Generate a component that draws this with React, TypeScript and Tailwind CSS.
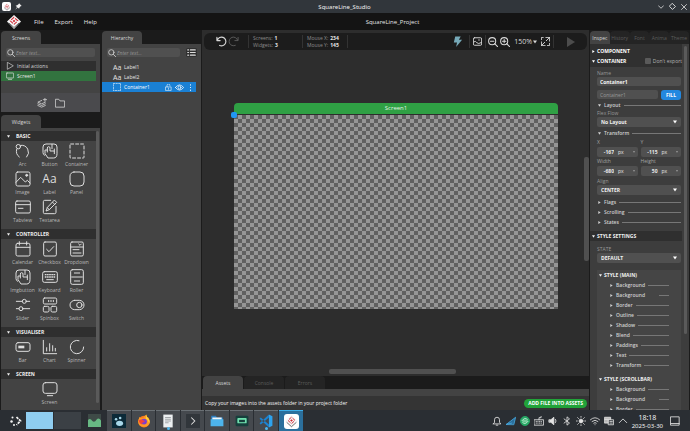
import React, { useState } from 'react';
import { clsx } from 'clsx';

interface IconProps {
    className?: string;
}

interface SvgProps extends IconProps {
    children: React.ReactNode;
    width?: number;
}

const Svg: React.FC<SvgProps> = ({ className = 'size-4', width = 1.5, children }) => (
    <svg
        viewBox="0 0 24 24"
        className={`shrink-0 ${className}`}
        fill="none"
        stroke="currentColor"
        strokeWidth={width}
        strokeLinecap="round"
        strokeLinejoin="round"
        aria-hidden="true"
    >
        {children}
    </svg>
);

const fist = (
    <>
        <path d="M4 18.500q-2.500-1-2.500-4V6q0-4.500 4.500-4.500h12q4.500 0 4.500 4.500v10q0 6.500-5 6.500H9L4.500 16v-5.500H8" />
        <path d="M8 13.500V7.500a2 2 0 0 1 4 0V12h6.500v4M15 2v6.500M18.500 12V9" />
    </>
);

const widgetIcons: Record<string, React.ReactNode> = {
    Arc: (
        <>
            <path d="M6.500 21A10.500 10.500 0 0 1 2.500 9.500M8.500 3.500A10.500 10.500 0 0 1 17.500 21" />
            <circle cx="5" cy="5.500" r="3.300" />
        </>
    ),
    Button: fist,
    Container: <rect x="1.500" y="1.500" width="21" height="21" rx="1" strokeDasharray="4.500 3" />,
    Image: (
        <>
            <rect x="1.500" y="1.500" width="21" height="21" rx="2.500" />
            <path d="M1.500 17l7-7.500 7 7 3-2.500 4 4" />
            <circle cx="17.500" cy="6.500" r="1.500" fill="currentColor" />
        </>
    ),
    Panel: <rect x="1.500" y="1.500" width="21" height="21" rx="6" />,
    Tabview: (
        <>
            <rect x="1" y="3" width="22" height="18" rx="2" />
            <path d="M1 8.500h22M5 14h7" />
        </>
    ),
    Textarea: (
        <>
            <path d="M13 2H4a2 2 0 0 0-2 2v16a2 2 0 0 0 2 2h15a2 2 0 0 0 2-2v-9" />
            <path d="M19 2l3 3-11 11-5 2 2-5zM16 5l3 3M8 13l3 3" />
        </>
    ),
    Calendar: (
        <>
            <rect x="1.500" y="3.500" width="21" height="19" rx="2.500" />
            <path d="M1.500 9.500h21M6.500 1v5M17.500 1v5" />
        </>
    ),
    Checkbox: (
        <>
            <rect x="2.500" y="1.500" width="19" height="21" rx="2" />
            <path d="M7 12.500l3.500 3.500 7-7.500" />
        </>
    ),
    Dropdown: (
        <>
            <rect x="2.500" y="1.500" width="19" height="21" rx="2" />
            <path d="M2.500 9h19M14.500 4.500l2 2 2-2M6 13h9M6 18h12" />
        </>
    ),
    Imgbutton: fist,
    Keyboard: (
        <>
            <rect x="1" y="4" width="22" height="16" rx="2.500" />
            <path d="M5 8.500h14M5 12h14" strokeDasharray="1 2.250" strokeWidth="2" />
            <path d="M7 16h10" />
        </>
    ),
    Roller: (
        <>
            <rect x="2.500" y="1" width="19" height="22" rx="2.500" />
            <path d="M8 6h8M4 12h16M8 18h8" />
        </>
    ),
    Slider: (
        <>
            <path d="M2 6.500h9M17 6.500h5M2 17.500h4M12 17.500h10" />
            <circle cx="14" cy="6.500" r="3" />
            <circle cx="9" cy="17.500" r="3" />
        </>
    ),
    Spinbox: (
        <>
            <rect x="2" y="1.500" width="20" height="9" rx="2" />
            <path d="M10 5v2M13.500 5v2M17 5v2" />
            <rect x="2" y="14" width="8.500" height="8.500" rx="2" />
            <rect x="13.500" y="14" width="8.500" height="8.500" rx="2" />
        </>
    ),
    Switch: (
        <>
            <rect x="1.500" y="5" width="21" height="14" rx="7" />
            <circle cx="15.500" cy="12" r="4" />
        </>
    ),
    Bar: (
        <>
            <rect x="1.500" y="5.500" width="21" height="13" rx="3" />
            <path d="M5 12h9" strokeWidth="4" strokeLinecap="butt" />
        </>
    ),
    Chart: <path d="M2 2v20h20M7 18v-5M11.500 18V7M16 18v-8M20 18v-4" />,
    Spinner: <path d="M15 2.500A10 10 0 1 0 22 12" />,
    Screen: (
        <>
            <rect x="1.500" y="2.500" width="21" height="16" rx="3.500" />
            <path d="M8 22h8" />
        </>
    ),
};

const widgetSections = [
    { title: 'BASIC', items: ['Arc', 'Button', 'Container', 'Image', 'Label', 'Panel', 'Tabview', 'Textarea'] },
    {
        title: 'CONTROLLER',
        items: ['Calendar', 'Checkbox', 'Dropdown', 'Imgbutton', 'Keyboard', 'Roller', 'Slider', 'Spinbox', 'Switch'],
    },
    { title: 'VISUALISER', items: ['Bar', 'Chart', 'Spinner'] },
    { title: 'SCREEN', items: ['Screen'] },
];

const Logo: React.FC<IconProps> = ({ className = 'size-4' }) => (
    <svg viewBox="0 0 24 24" className={`shrink-0 ${className}`} aria-hidden="true">
        <path d="M12 0l12 11-12 13L0 11z" fill="#f7f7f7" />
        <path d="M12 4L5.500 10 12 16l6.500-6z" fill="none" stroke="#d02a34" strokeWidth="1.800" strokeDasharray="6.500 2.300" />
        <path d="M12 8l-2.500 2.300L12 12.500l2.500-2.200z" fill="#d02a34" />
        <path d="M3 13.500l9 8 9-8" fill="none" stroke="#3a3a3a" strokeWidth="1.300" />
    </svg>
);

const Triangle: React.FC<{ open?: boolean; className?: string }> = ({ open = false, className = 'size-1' }) => (
    <svg viewBox="0 0 10 10" className={`shrink-0 ${className}`} fill="currentColor" aria-hidden="true">
        <path d={open ? 'M0 1h10L5 9z' : 'M1 0v10l8-5z'} />
    </svg>
);

const SearchIcon = () => (
    <Svg className="size-2" width={2.5}>
        <circle cx="10" cy="10" r="8" />
        <path d="M16 16l7 7" />
    </Svg>
);

const Tab: React.FC<{ label: string; active?: boolean; className?: string }> = ({ label, active = false, className = 'w-10' }) => (
    <button
        className={clsx(
            'h-[13px] rounded-t-[4px] text-center leading-[12px]',
            active ? 'bg-[#434343] text-[#d8d8d8]' : 'bg-[#242424] text-[#5c5c5c]',
            className,
        )}
    >
        {label}
    </button>
);

const SearchBox: React.FC<{ label: string }> = ({ label }) => (
    <label className="flex h-[9px] min-w-0 flex-1 items-center gap-px rounded-[2px] bg-[#505050] pl-px text-[#d0d0d0]">
        <SearchIcon />
        <input
            aria-label={label}
            placeholder="Enter text..."
            className="h-full w-full min-w-0 bg-transparent italic outline-none placeholder:text-[#969696]"
        />
    </label>
);

const ScreensPanel = () => (
    <section>
        <Tab label="Screens" active />
        <div className="flex flex-col bg-[#434343]">
            <div className="flex pt-1 pr-[5px] pb-1 pl-[5px]">
                <SearchBox label="Search screens" />
            </div>
            <ul className="mr-1 h-8">
                <li className="flex h-[10px] items-center gap-[3px] bg-[#2f2f2f] pl-[5px] text-[#d8d8d8]">
                    <Svg className="size-2" width={2}><path d="M4 2v20l17-10z" /></Svg>
                    Initial actions
                </li>
                <li className="flex h-[10px] items-center gap-[3px] bg-[#32733f] pl-[5px] text-[#e8e8e8]">
                    <Svg className="size-2" width={2}>
                        <rect x="1" y="3" width="22" height="15" rx="2" />
                        <path d="M7 22h10" />
                    </Svg>
                    Screen1
                </li>
            </ul>
            <div className="flex h-[19px] items-center justify-center gap-2 bg-[#4a4a4d] text-[#d0d0d0]">
                <button aria-label="Add screen">
                    <Svg className="size-[10px]" width={2}>
                        <path d="M11 6L2 10l9 4 9-4M2 14l9 4 9-4M2 18l9 4 9-4M19 0v8M15 4h8" />
                    </Svg>
                </button>
                <button aria-label="Add folder">
                    <Svg className="size-[10px]" width={2}>
                        <path d="M1 21V3h8l3 4h11v14z" />
                    </Svg>
                </button>
            </div>
        </div>
    </section>
);

const WidgetsPanel = () => (
    <section className="mt-[3px] flex min-h-0 flex-1 flex-col">
        <Tab label="Widgets" active className="w-10 shrink-0" />
        <div className="flex min-h-0 flex-1 overflow-hidden bg-[#434343] pt-[3px]">
            <div className="min-w-0 flex-1">
                {widgetSections.map((section) => (
                    <div key={section.title} className="pb-1">
                        <h2 className="flex h-[10px] items-center gap-1.5 bg-[#2f2f2f] pl-1.5 font-bold text-[#f0f0f0]">
                            <Triangle open className="size-[3px]" />
                            {section.title}
                        </h2>
                        <div
                            className={clsx(
                                'pr-1.5 pl-2',
                                section.items.length === 1 ? 'flex justify-center' : 'grid grid-cols-3',
                            )}
                        >
                            {section.items.map((item) => (
                                <button key={item} className="flex h-7 flex-col items-center pt-[2px] text-[#dedede]">
                                    {item === 'Label' ? (
                                        <span className="text-[12px] leading-4">Aa</span>
                                    ) : (
                                        <Svg className="size-4">{widgetIcons[item]}</Svg>
                                    )}
                                    <span className="mt-px leading-[8px] text-[#b8b8b8]">{item}</span>
                                </button>
                            ))}
                        </div>
                    </div>
                ))}
            </div>
            <div className="mb-[7px] w-[3px] rounded-full bg-[#5a5a5a]" />
            <div className="w-px" />
        </div>
    </section>
);

const HierarchyPanel = () => (
    <section className="flex w-[99px] shrink-0 flex-col">
        <Tab label="Hierarchy" active className="w-10 shrink-0" />
        <div className="flex-1 bg-[#434343]">
            <div className="flex items-center gap-1.5 pt-1 pr-1 pb-[5px] pl-[5px]">
                <SearchBox label="Search hierarchy" />
                <button aria-label="List options" className="rounded-[2px] bg-[#303030] px-px text-[#e0e0e0]">
                    <Svg className="size-[9px]" width={3}>
                        <path d="M2 5h2M9 5h13M2 12h2M9 12h13M2 19h2M9 19h13" />
                    </Svg>
                </button>
            </div>
            <ul className="mr-[5px] text-[#e4e4e4]">
                {['Label1', 'Label2'].map((name) => (
                    <li key={name} className="flex h-[10px] items-center gap-[3px] pl-[11px]">
                        <span className="w-2 text-[7px]">Aa</span>
                        {name}
                    </li>
                ))}
                <li className="flex h-[10px] items-center gap-[3px] bg-[#1a80d4] pr-[2px] pl-[11px] text-white">
                    <Svg className="size-2" width={2}>
                        <rect x="1" y="1" width="22" height="22" strokeDasharray="4 4" />
                    </Svg>
                    <span className="flex-1">Container1</span>
                    <button aria-label="Lock">
                        <Svg className="size-[7px]" width={2}>
                            <rect x="3" y="10" width="18" height="12" />
                            <path d="M7 10V5a5 5 0 0 1 10 0M12 14v4" />
                        </Svg>
                    </button>
                    <button aria-label="Visibility">
                        <Svg className="size-[9px]" width={2}>
                            <path d="M1 12q11-14 22 0-11 14-22 0z" />
                            <circle cx="12" cy="12" r="4" />
                        </Svg>
                    </button>
                    <button aria-label="More">
                        <Svg className="size-[7px]" width={4}>
                            <path d="M12 3v.1M12 12v.1M12 21v.1" />
                        </Svg>
                    </button>
                </li>
            </ul>
        </div>
    </section>
);

const Divider = () => <div className="h-[13px] w-px shrink-0 bg-[#333333]" />;

const Stat: React.FC<{ rows: [string, string][]; className: string }> = ({ rows, className }) => (
    <dl className={`ml-1 shrink-0 leading-[7px] ${className}`}>
        {rows.map(([name, value]) => (
            <div key={name} className="flex gap-[2px]">
                <dt className="text-[#8c8c8c]">{name}</dt>
                <dd className="font-bold text-[#e6e6e6]">{value}</dd>
            </div>
        ))}
    </dl>
);

const CanvasToolbar = () => (
    <div className="mx-[2px] mt-[3px] flex h-[17px] shrink-0 items-center rounded-[6px] bg-[#1c1c1c] text-[#d8d8d8]">
        <button aria-label="Undo" className="ml-3">
            <Svg className="size-[11px]" width={2.5}><path d="M2 3v7h7M3 9A9.500 9.500 0 1 1 8 20.500" /></Svg>
        </button>
        <button aria-label="Redo" className="ml-px text-[#5d5d5d]">
            <Svg className="size-[11px]" width={2}><path d="M22 3v7h-7M21 9A9.500 9.500 0 1 0 16 20.500" /></Svg>
        </button>
        <div className="ml-[9px] flex items-center">
            <Divider />
            <Stat className="w-[49px]" rows={[['Screens:', '1'], ['Widgets:', '3']]} />
            <Divider />
            <Stat className="w-[40px]" rows={[['Mouse X:', '234'], ['Mouse Y:', '145']]} />
            <Divider />
        </div>
        <div className="flex-1" />
        <button aria-label="Events" className="mr-1.5 text-[#76a9b8]">
            <svg viewBox="0 0 24 24" className="size-[11px]" fill="currentColor" aria-hidden="true">
                <path d="M7 1h12l-4 7h7L9 24l2-10H4z" />
            </svg>
        </button>
        <Divider />
        <button aria-label="Background image" className="mx-[3px]">
            <Svg className="size-[9px]" width={2.5}>
                <rect x="1" y="2" width="22" height="20" rx="3" />
                <path d="M2 13q5-4 8 2 4 5 12 0M15 8h2" />
            </Svg>
        </button>
        <Divider />
        <button aria-label="Zoom out" className="ml-[2px]">
            <Svg className="size-[10px]" width={2.5}>
                <circle cx="10" cy="10" r="8.500" />
                <path d="M16 16l7 7M6 10h8" />
            </Svg>
        </button>
        <button aria-label="Zoom in" className="mx-[2px]">
            <Svg className="size-[10px]" width={2.5}>
                <circle cx="10" cy="10" r="8.500" />
                <path d="M16 16l7 7M6 10h8M10 6v8" />
            </Svg>
        </button>
        <button className="ml-[2px] flex items-center gap-px text-[7px]">
            150%
            <Triangle open className="size-1" />
        </button>
        <button aria-label="Fit to screen" className="mr-[3px] ml-1">
            <Svg className="size-[9px]" width={2.5}>
                <path d="M1 7V1h5M23 17v6h-6M13 1h10v10M23 1l-9 9M11 23H1V13M1 23l9-9" />
            </Svg>
        </button>
        <Divider />
        <button aria-label="Play" className="mr-[11px] ml-3 text-[#4c4c4c]">
            <Triangle className="size-[10px]" />
        </button>
    </div>
);

const CanvasArea = () => (
    <div className="flex min-h-0 flex-1 flex-col">
        <div className="flex min-h-0 flex-1">
            <div className="min-w-0 flex-1 pt-[53px] pr-[26px] pl-8">
                <div className="h-[11px] rounded-t-[4px] bg-[#2fa044] text-center text-[6px] leading-[11px] text-[#e4f4e6]">
                    Screen1
                </div>
                <div className="relative mt-px aspect-[5/3] bg-[conic-gradient(#969696_25%,#606060_0_50%,#969696_0_75%,#606060_0)] bg-[length:8px_8px]">
                    <div className="absolute -top-[3px] -left-[3px] size-[6px] rounded-[2px] bg-[#2196f3]" />
                </div>
            </div>
            <div className="flex w-[5px] flex-col pt-[107px]">
                <div className="h-[104px] rounded-[2px] bg-[#505050]" />
            </div>
        </div>
        <div className="mr-1.5 mb-[2px] flex h-[5px] shrink-0 justify-center">
            <div className="w-1/3 rounded-[2px] bg-[#505050]" />
        </div>
    </div>
);

const AssetsPanel = () => (
    <div className="shrink-0 bg-[#1b1b1b]">
        <div className="flex gap-px px-px">
            <Tab label="Assets" active />
            <Tab label="Console" />
            <Tab label="Errors" />
        </div>
        <div className="h-[7px] bg-[#434343]" />
        <div className="flex h-[14px] items-center justify-between bg-[#343434] pr-[2px] pl-[3px] text-[#f4f4f4]">
            <span className="font-medium">Copy your images into the assets folder in your project folder</span>
            <button className="h-[9px] rounded-full bg-[#22a339] px-1 leading-[9px] font-bold text-white">
                ADD FILE INTO ASSETS
            </button>
        </div>
    </div>
);

const SelectField: React.FC<{ label: string; value: string }> = ({ label, value }) => (
    <label className="block">
        <span className="block leading-[7px] text-[#989898]">{label}</span>
        <span className="relative block">
            <select
                defaultValue={value}
                className="block h-[10px] w-full appearance-none rounded-[2px] bg-[#505050] pl-1 font-bold text-[#f0f0f0] outline-none"
            >
                <option>{value}</option>
            </select>
            <Triangle open className="pointer-events-none absolute top-[3px] right-1 size-1 text-white" />
        </span>
    </label>
);

const NumberField: React.FC<{ label: string; value: string }> = ({ label, value }) => (
    <label className="min-w-0 flex-1">
        <span className="block leading-[9px] text-[#a4a4a4]">{label}</span>
        <span className="flex h-[10px] items-center rounded-[2px] bg-[#505050] pr-[3px] font-bold text-[#e8e8e8]">
            <input defaultValue={value} className="w-[17px] min-w-0 bg-transparent text-right outline-none" />
            <span className="ml-1 flex-1 font-normal">px</span>
            <Triangle open className="size-[2px] text-[#b0b0b0]" />
        </span>
    </label>
);

interface FoldProps {
    label: string;
    open?: boolean;
    shortLine?: boolean;
    className?: string;
}

const Fold: React.FC<FoldProps> = ({ label, open, shortLine = false, className = '' }) => (
    <button className={`flex h-[10px] w-full items-center gap-[3px] font-semibold text-[#d0d0d0] ${className}`}>
        <Triangle open={open} className="size-[3px]" />
        {label}
        <span className={clsx('h-px bg-[#777777]', shortLine ? 'ml-auto w-[10px]' : 'flex-1')} />
    </button>
);

const styleGroups = [
    {
        title: 'STYLE (MAIN)',
        rows: ['Background', 'Background', 'Border', 'Outline', 'Shadow', 'Blend', 'Paddings', 'Text', 'Transform'],
    },
    { title: 'STYLE (SCROLLBAR)', rows: ['Background', 'Background', 'Border'] },
];

const Inspector = () => {
    const [dontExport, setDontExport] = useState(false);

    return (
        <aside className="flex w-[101px] shrink-0 flex-col bg-[#1b1b1b] px-px pt-px">
            <div className="flex shrink-0">
                {['Inspec', 'History', 'Font', 'Anima', 'Theme'].map((label, i) => (
                    <Tab key={label} label={label} active={i === 0} className="min-w-0 flex-1" />
                ))}
            </div>
            <div className="flex min-h-0 flex-1 overflow-hidden bg-[#3d3d3d]">
                <div className="min-w-0 flex-1">
                    <div className="bg-[#303030] pt-[2px] pb-px font-bold text-white">
                        <button className="flex h-[10px] items-center gap-[2px] pl-[2px]">
                            <Triangle className="size-[3px]" />
                            COMPONENT
                        </button>
                        <div className="flex h-[10px] items-center gap-[2px] pl-[2px]">
                            <Triangle open className="size-[3px]" />
                            <span className="flex-1">CONTAINER</span>
                            <label className="flex shrink-0 items-center gap-[2px] font-normal whitespace-nowrap text-[#b4b4b4]">
                                <input
                                    type="checkbox"
                                    checked={dontExport}
                                    onChange={(e) => setDontExport(e.target.checked)}
                                    className="size-[6px] appearance-none rounded-[1px] bg-[#5a5a5a] checked:bg-[#1a80d4]"
                                />
                                Don't export
                            </label>
                        </div>
                    </div>
                    <div className="pt-[2px] pr-px pb-1 pl-[7px]">
                        <label className="block">
                            <span className="block leading-[8px] text-[#989898]">Name</span>
                            <input
                                defaultValue="Container1"
                                className="block h-[9px] w-full rounded-[2px] bg-[#505050] pl-[3px] font-bold text-[#f4f4f4] outline-none"
                            />
                        </label>
                        <div className="mt-1 flex gap-[3px]">
                            <input
                                aria-label="Generated name"
                                readOnly
                                value="Container1"
                                className="h-[9px] min-w-0 flex-1 rounded-[2px] bg-[#505050] pl-[3px] text-[#9a9a9a] outline-none"
                            />
                            <button className="h-[10px] w-5 rounded-[3px] bg-[#2388e0] leading-[10px] font-bold text-white">FILL</button>
                        </div>
                        <Fold label="Layout" open className="pl-px" />
                        <SelectField label="Flex Flow" value="No Layout" />
                        <Fold label="Transform" open className="mt-px pl-px" />
                        <div className="flex gap-[3px]">
                            <NumberField label="X" value="-167" />
                            <NumberField label="Y" value="-115" />
                        </div>
                        <div className="flex gap-[3px]">
                            <NumberField label="Width" value="-680" />
                            <NumberField label="Height" value="50" />
                        </div>
                        <div className="mt-[2px]">
                            <SelectField label="Align" value="CENTER" />
                        </div>
                        <div className="pt-[2px] pl-px">
                            <Fold label="Flags" />
                            <Fold label="Scrolling" />
                            <Fold label="States" />
                        </div>
                    </div>
                    <h2 className="flex h-[10px] items-center gap-[2px] bg-[#2f2f2f] pl-[2px] font-bold text-[#f0f0f0]">
                        <Triangle open className="size-[3px]" />
                        STYLE SETTINGS
                    </h2>
                    <div className="pt-[5px] pr-px pl-[7px]">
                        <SelectField label="STATE" value="DEFAULT" />
                        <div className="mt-[7px] bg-[#454545]">
                            {styleGroups.map((group) => (
                                <div key={group.title} className="pb-1">
                                    <h3 className="flex h-[10px] items-center gap-[2px] pl-[2px] font-bold text-[#f0f0f0]">
                                        <Triangle open className="size-[3px]" />
                                        {group.title}
                                    </h3>
                                    <div className="pr-3 pl-[13px]">
                                        {group.rows.map((row, i) => (
                                            <Fold key={i} label={row} shortLine={i === 1} />
                                        ))}
                                    </div>
                                </div>
                            ))}
                        </div>
                    </div>
                </div>
                <div className="mx-[2px] mt-[2px] h-[288px] w-[3px] rounded-full bg-[#5a5a5a]" />
            </div>
        </aside>
    );
};

const taskIcons: { name: string; running?: boolean; icon: React.ReactNode }[] = [
    {
        name: 'Paw notes',
        icon: (
            <>
                <rect width="24" height="24" fill="#0b2a38" />
                <ellipse cx="13" cy="16" rx="6" ry="4.500" fill="#a8d8ea" />
                <circle cx="7" cy="9" r="2.200" fill="#a8d8ea" />
                <circle cx="14" cy="7" r="2.200" fill="#a8d8ea" />
            </>
        ),
    },
    {
        name: 'Firefox',
        icon: (
            <>
                <circle cx="12" cy="13" r="10" fill="#ff7a1a" />
                <path d="M4 5q2 3 7 2 2-5 5-6 0 4 4 7 4 8-3 13Q3 24 2 13z" fill="#ff9a25" />
                <path d="M16 1q0 4 4 7 3 4 1 9-1-7-6-9z" fill="#ffd43b" />
                <circle cx="12" cy="13" r="5" fill="#7b3fd0" />
                <path d="M3 11q4-3 8 0 4 1 1 3-4 0-3 4-5-1-6-7z" fill="#f6423c" />
            </>
        ),
    },
    {
        name: 'Document',
        running: true,
        icon: (
            <>
                <rect x="4" y="1" width="16" height="22" fill="#eceff1" />
                <path d="M7 6h10M7 9h10M7 12h10M7 15h6" stroke="#8a8f93" strokeWidth="1.300" />
            </>
        ),
    },
    {
        name: 'Terminal',
        icon: (
            <>
                <rect width="24" height="24" rx="1" fill="#31363b" />
                <path d="M9 6l6 6-6 6" fill="none" stroke="#e0e0e0" strokeWidth="1.800" />
            </>
        ),
    },
    {
        name: 'Files',
        icon: (
            <>
                <path d="M2 3h8l2 3h10v14H2z" fill="#2d7fc1" />
                <path d="M4 6h16v4H4z" fill="#eef6fb" />
                <path d="M1 9h22v12H1z" fill="#4db4ec" />
            </>
        ),
    },
    {
        name: 'Recorder',
        icon: (
            <>
                <rect x="1" y="3" width="22" height="18" rx="2" fill="#173f3c" />
                <rect x="4" y="7" width="16" height="9" rx="1.500" fill="#6fe0ae" />
                <rect x="7" y="10" width="10" height="4" fill="#173f3c" />
            </>
        ),
    },
    {
        name: 'Code editor',
        running: true,
        icon: (
            <>
                <path d="M17 1l6 3v16l-6 3z" fill="#2ea3ee" />
                <path d="M17 6L3 18l-2-2L17 1zM17 18L3 6 1 8l16 15z" fill="#1d83d0" />
            </>
        ),
    },
];

const TrayIcon: React.FC<{ name: string; children: React.ReactNode }> = ({ name, children }) => (
    <button aria-label={name}>
        <Svg className="size-[10px]" width={2}>{children}</Svg>
    </button>
);

const Taskbar = () => (
    <footer className="flex h-[21px] shrink-0 items-center bg-[#2a2e33] text-[#e4e4e4]">
        <button aria-label="Launcher" className="ml-[10px]">
            <svg viewBox="0 0 24 24" className="size-3" aria-hidden="true">
                <path d="M13 4l8 8-8 8" fill="none" stroke="#f4f4f4" strokeWidth="3.500" strokeDasharray="5 2" />
                <circle cx="5" cy="5" r="2" fill="#f4f4f4" />
                <circle cx="3" cy="13" r="2.500" fill="#f4f4f4" />
                <circle cx="8" cy="20" r="2" fill="#f4f4f4" />
            </svg>
        </button>
        <div className="ml-1 flex h-[17px] gap-px">
            <div className="w-[27px] bg-[#8fcdf0]" />
            <div className="w-[27px] bg-[#3b4045]" />
        </div>
        <svg viewBox="0 0 24 24" className="mr-1.5 ml-[7px] size-[13px] shrink-0" aria-hidden="true">
            <rect width="24" height="24" fill="#3e4a47" />
            <path d="M0 24V11q4-4 8 2 4 4 8-3 4-4 8 2v12z" fill="#68b984" />
        </svg>
        <div className="flex h-full gap-px">
            {taskIcons.map((task) => (
                <button
                    key={task.name}
                    aria-label={task.name}
                    className="relative flex w-6 items-center justify-center border-t border-[#6a7075] bg-[#45494e] nth-[even]:w-[23px]"
                >
                    <svg viewBox="0 0 24 24" className="size-[14px]">{task.icon}</svg>
                    {task.running && <span className="absolute bottom-px size-[3px] rounded-full bg-[#4fb7ee]" />}
                </button>
            ))}
            <button aria-label="SquareLine Studio" className="flex w-6 items-center justify-center border-t border-[#3daee9] bg-[#2b6f9c]">
                <span className="flex size-[15px] items-center justify-center rounded-[3px] bg-white">
                    <Logo className="size-[13px]" />
                </span>
            </button>
        </div>
        <div className="flex-1" />
        <div className="flex items-center gap-1">
            <TrayIcon name="Notifications"><path d="M3 19h18l-3-4V9a6 6 0 0 0-12 0v6zM10 22h4" /></TrayIcon>
            <TrayIcon name="Share"><path d="M1 20L23 3l-4 17zM1 20l13-3" stroke="#47a8e0" fill="#2a6d9a" /></TrayIcon>
            <TrayIcon name="Sync">
                <circle cx="12" cy="12" r="11" fill="#28a866" stroke="#28a866" />
                <path d="M5 11q7-9 13-2M19 13q-7 9-13 2M8 12h8" stroke="#e8fff0" />
            </TrayIcon>
            <TrayIcon name="Keyboard layout">
                <rect x="1" y="9" width="22" height="13" />
                <path d="M5 13h14M5 17h14" strokeDasharray="1 3" />
                <path d="M12 9V4h5V1" />
            </TrayIcon>
            <TrayIcon name="Volume">
                <path d="M3 9h4l7-6v18l-7-6H3z" fill="currentColor" />
                <path d="M18 8q3 4 0 8" />
            </TrayIcon>
            <TrayIcon name="Bluetooth"><path d="M5 7l13 10-6 5V2l6 5L5 17" /></TrayIcon>
            <TrayIcon name="Brightness">
                <circle cx="12" cy="12" r="4.500" fill="currentColor" />
                <path d="M12 1v2M12 21v2M1 12h2M21 12h2M4 4l2 2M18 18l2 2M4 20l2-2M18 6l2-2" />
            </TrayIcon>
            <TrayIcon name="Network">
                <path d="M1 9q11-10 22 0M5 13q7-6 14 0M9 17q3-3 6 0M12 21v.1" />
            </TrayIcon>
            <TrayIcon name="Power">
                <path d="M2 3h14v14H2zM2 8h14" fill="#b8b8b8" />
                <rect x="11" y="9" width="12" height="12" fill="#2a2e33" />
                <path d="M14 13h6M14 17h6" />
            </TrayIcon>
            <TrayIcon name="Show hidden icons"><path d="M3 16l9-9 9 9" /></TrayIcon>
        </div>
        <div className="ml-1 pt-px text-center font-['Noto_Sans',sans-serif] text-[6px] text-[#f0f0f0]">
            <div className="text-[7px] leading-[9px]">18:18</div>
            <div className="leading-[8px]">2025-03-30</div>
        </div>
        <button aria-label="Show desktop" className="mr-[10px] ml-[7px]">
            <Svg className="size-[10px]" width={2}>
                <path d="M2 2h20v20H2zM2 18h20" />
            </Svg>
        </button>
    </footer>
);

export default function App() {
    return (
        <div className="flex h-screen flex-col overflow-hidden bg-[#1b1b1b] font-['Open_Sans','Noto_Sans',sans-serif] text-[5px] leading-none">
            <header className="flex h-[13px] shrink-0 items-center justify-between bg-[#31363b] px-[2px] font-['Noto_Sans',sans-serif] text-[6px] text-[#eeeeee]">
                <div className="flex flex-1 items-center gap-1">
                    <span className="flex size-[9px] items-center justify-center rounded-[2px] bg-white">
                        <Logo className="size-2" />
                    </span>
                    <button aria-label="Pin">
                        <svg viewBox="0 0 24 24" className="size-[7px]" fill="currentColor" aria-hidden="true">
                            <path d="M14 1l9 9-4 1-4 5-1 4-5-5-8 8 6-9-5-5 5-1 5-4z" />
                        </svg>
                    </button>
                </div>
                <h1>SquareLine_Studio</h1>
                <div className="flex flex-1 items-center justify-end gap-[5px] pr-px">
                    <button aria-label="Minimize"><Svg className="size-[6px]" width={3}><path d="M2 7l10 10L22 7" /></Svg></button>
                    <button aria-label="Maximize"><Svg className="size-[7px]" width={3}><path d="M12 2l10 10-10 10L2 12z" /></Svg></button>
                    <button aria-label="Close"><Svg className="size-[6px]" width={3}><path d="M2 2l20 20M22 2L2 22" /></Svg></button>
                </div>
            </header>
            <nav className="flex h-[17px] shrink-0 items-center bg-[#141414] text-[6px] text-[#e6e6e6]">
                <div className="flex w-[202px] items-center gap-[11px] pl-[7px]">
                    <Logo className="mr-[2px] size-[14px]" />
                    <button>File</button>
                    <button>Export</button>
                    <button>Help</button>
                </div>
                <span className="flex-1 text-center">SquareLine_Project</span>
                <div className="w-[107px]" />
            </nav>
            <main className="flex min-h-0 flex-1">
                <div className="flex shrink-0 gap-[2px] pt-px pr-px pl-px">
                    <div className="flex w-[99px] shrink-0 flex-col">
                        <ScreensPanel />
                        <WidgetsPanel />
                    </div>
                    <HierarchyPanel />
                </div>
                <div className="flex min-w-0 flex-1 flex-col bg-[#2d2d2d]">
                    <CanvasToolbar />
                    <CanvasArea />
                    <AssetsPanel />
                </div>
                <Inspector />
            </main>
            <Taskbar />
        </div>
    );
}
